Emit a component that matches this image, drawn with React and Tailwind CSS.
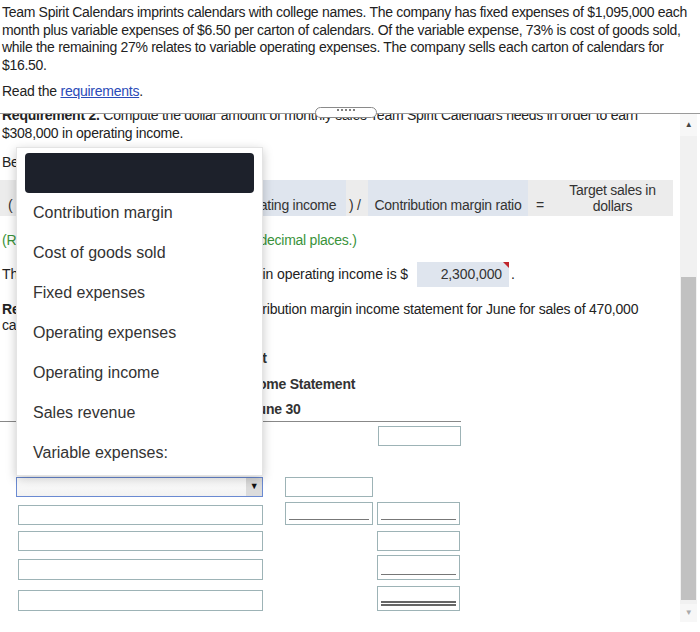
const menuItems = [
  'Contribution margin',
  'Cost of goods sold',
  'Fixed expenses',
  'Operating expenses',
  'Operating income',
  'Sales revenue',
  'Variable expenses:',
];

function Box({ line, w = 'w-[83px]', h = 'h-[20px]' }) {
  return (
    <div className={`${w} ${h} border border-[#9db3b6] bg-white flex flex-col justify-end px-[3px] pb-[4px]`}>
      {line === 'single' && <div className="h-px bg-[#777]" />}
      {line === 'double' && (
        <div className="flex flex-col gap-[1px]">
          <div className="h-[2px] bg-[#666]" />
          <div className="h-[2px] bg-[#666]" />
        </div>
      )}
    </div>
  );
}

export default function App() {
  return (
    <div className="relative w-[700px] h-[632px] bg-white overflow-hidden font-['Liberation_Sans',Arial,sans-serif] text-[#222] text-[14px] tracking-[-0.25px]">
      <p className="px-[2px] pt-[4px] leading-[17.7px] tracking-[-0.3px]">
        Team Spirit Calendars imprints calendars with college names. The company has fixed expenses of $1,095,000 each month plus variable expenses of $6.50 per carton of calendars. Of the variable expense, 73% is cost of goods sold, while the remaining 27% relates to variable operating expenses. The company sells each carton of calendars for $16.50.
      </p>
      <p className="px-[2px] mt-[7px] leading-[18px]">
        Read the <a className="text-[#2a4bb8] underline">requirements</a>.
      </p>

      {/* divider + handle */}
      <div className="relative mt-[13px] h-px bg-[#9a9a9a]">
        <div className="absolute left-[315px] -top-[6px] w-[62px] h-[11px] rounded-full border border-[#8a8a8a] bg-white flex items-start justify-center gap-[2px] pt-[1px]">
          <span className="w-[2px] h-[2px] bg-[#555] rounded-full" />
          <span className="w-[2px] h-[2px] bg-[#555] rounded-full" />
          <span className="w-[2px] h-[2px] bg-[#555] rounded-full" />
          <span className="w-[2px] h-[2px] bg-[#555] rounded-full" />
          <span className="w-[2px] h-[2px] bg-[#555] rounded-full" />
        </div>
      </div>

      <div className="flex h-[508px]">
        <div className="w-[680px] overflow-hidden">
          <div className="-mt-[8px] px-[2px]">
            <p className="leading-[18px]">
              <b>Requirement 2.</b> Compute the dollar amount of monthly sales Team Spirit Calendars needs in order to earn $308,000 in operating income.
            </p>
            <p className="mt-[11px] leading-[18px]">Begin by identifying the formula.</p>

            {/* formula row */}
            <div className="mt-[9px] -ml-[2px] w-[673px] h-[36px] bg-[#ececec] flex items-stretch text-[#333] leading-[16px]">
              <div className="w-[18px] pl-[8px] flex items-end pb-[3px]">(</div>
              <div className="w-[140px] bg-[#dfe5ee] flex items-end justify-center pb-[3px]">Fixed expenses</div>
              <div className="w-[18px] flex items-end justify-center pb-[3px]">+</div>
              <div className="w-[170px] bg-[#dfe5ee] flex items-end justify-center pb-[3px] pl-[6px]">Target operating income</div>
              <div className="w-[22px] pl-[3px] flex items-end pb-[3px]">) /</div>
              <div className="w-[160px] bg-[#dfe5ee] flex items-end justify-center pb-[3px]">Contribution margin ratio</div>
              <div className="w-[24px] flex items-end justify-center pb-[3px]">=</div>
              <div className="flex-1 text-center pt-[2px]">Target sales in<br />dollars</div>
            </div>

            <p className="mt-[15px] leading-[18px] text-[#3a933a]">(Round the contribution margin ratio to two decimal places.)</p>

            <div className="mt-[13px] h-[25px] flex items-center tracking-[-0.1px]">
              <span>The target sales needed to earn $308,000 in operating income is $</span>
              <div className="relative ml-[9px] w-[92px] h-[25px] bg-[#dfe5ee] flex items-center justify-end pr-[7px] text-[#333]">
                2,300,000
                <div className="absolute right-0 top-0 w-0 h-0 border-t-[6px] border-t-[#c0262c] border-l-[6px] border-l-transparent" />
              </div>
              <span className="ml-[2px]">.</span>
            </div>

            <p className="mt-[14px] leading-[16px] tracking-[-0.2px]">
              <b>Requirement 3.</b> Prepare Team Spirit's contribution margin income statement for June for sales of 470,000 cartons of calendars.
            </p>

            {/* statement */}
            <div className="mt-[12px] -ml-[2px] w-[461px]">
              <div className="border-b border-[#888] text-center font-bold text-[#333]">
                <div className="leading-[26px]">Team Spirit</div>
                <div className="leading-[26px]">Contribution Margin Income Statement</div>
                <div className="leading-[24px]">Month Ended June 30</div>
              </div>

              <div className="flex mt-[4px]">
                <div className="w-[246px] ml-[18px]" />
                <div className="ml-[115px]"><Box /></div>
              </div>
              <div className="flex mt-[31px]">
                <div className="ml-[16px] w-[247px] h-[20px] border border-[#6a8ad2] bg-gradient-to-b from-white to-[#f2f2f2] flex justify-end">
                  <div className="w-[16px] h-full bg-[#dcdcdc] flex items-center justify-center text-[9px] text-[#111]">▼</div>
                </div>
                <div className="ml-[22px]"><Box w="w-[88px]" /></div>
              </div>
              <div className="flex items-end mt-[5px]">
                <div className="ml-[18px]"><Box w="w-[245px]" /></div>
                <div className="ml-[22px]"><Box w="w-[88px]" h="h-[23px]" line="single" /></div>
                <div className="ml-[4px]"><Box w="w-[83px]" h="h-[23px]" line="single" /></div>
              </div>
              <div className="flex mt-[6px]">
                <div className="ml-[18px]"><Box w="w-[245px]" /></div>
                <div className="ml-[114px]"><Box /></div>
              </div>
              <div className="flex items-end mt-[4px]">
                <div className="ml-[18px]"><Box w="w-[245px]" h="h-[21px]" /></div>
                <div className="ml-[114px]"><Box h="h-[25px]" line="single" /></div>
              </div>
              <div className="flex items-end mt-[6px]">
                <div className="ml-[18px]"><Box w="w-[245px]" h="h-[21px]" /></div>
                <div className="ml-[114px]"><Box h="h-[25px]" line="double" /></div>
              </div>
            </div>
          </div>
        </div>

        {/* scrollbar */}
        <div className="w-[17px] flex flex-col bg-[#f1f1f1]">
          <div className="h-[22px] bg-[#f7f7f7] flex items-center justify-center text-[8px] text-[#444]">▲</div>
          <div className="h-[141px]" />
          <div className="h-[323px] mx-[1px] bg-[#c1c1c1]" />
          <div className="flex-1" />
          <div className="h-[18px] bg-[#f7f7f7] flex items-center justify-center text-[8px] text-[#aaa]">▼</div>
        </div>
      </div>

      {/* open dropdown menu */}
      <div className="absolute left-[16px] top-[147px] w-[247px] h-[329px] bg-white border border-[#e4e4e4] shadow-[0_3px_10px_rgba(0,0,0,0.22)] px-[8px] pt-[5px] text-[16px] text-[#333] tracking-normal">
        <div className="h-[40px] rounded-[4px] bg-[#1d212b]" />
        {menuItems.map((item) => (
          <div key={item} className="h-[40px] flex items-center pl-[8px]">{item}</div>
        ))}
      </div>
    </div>
  );
}
